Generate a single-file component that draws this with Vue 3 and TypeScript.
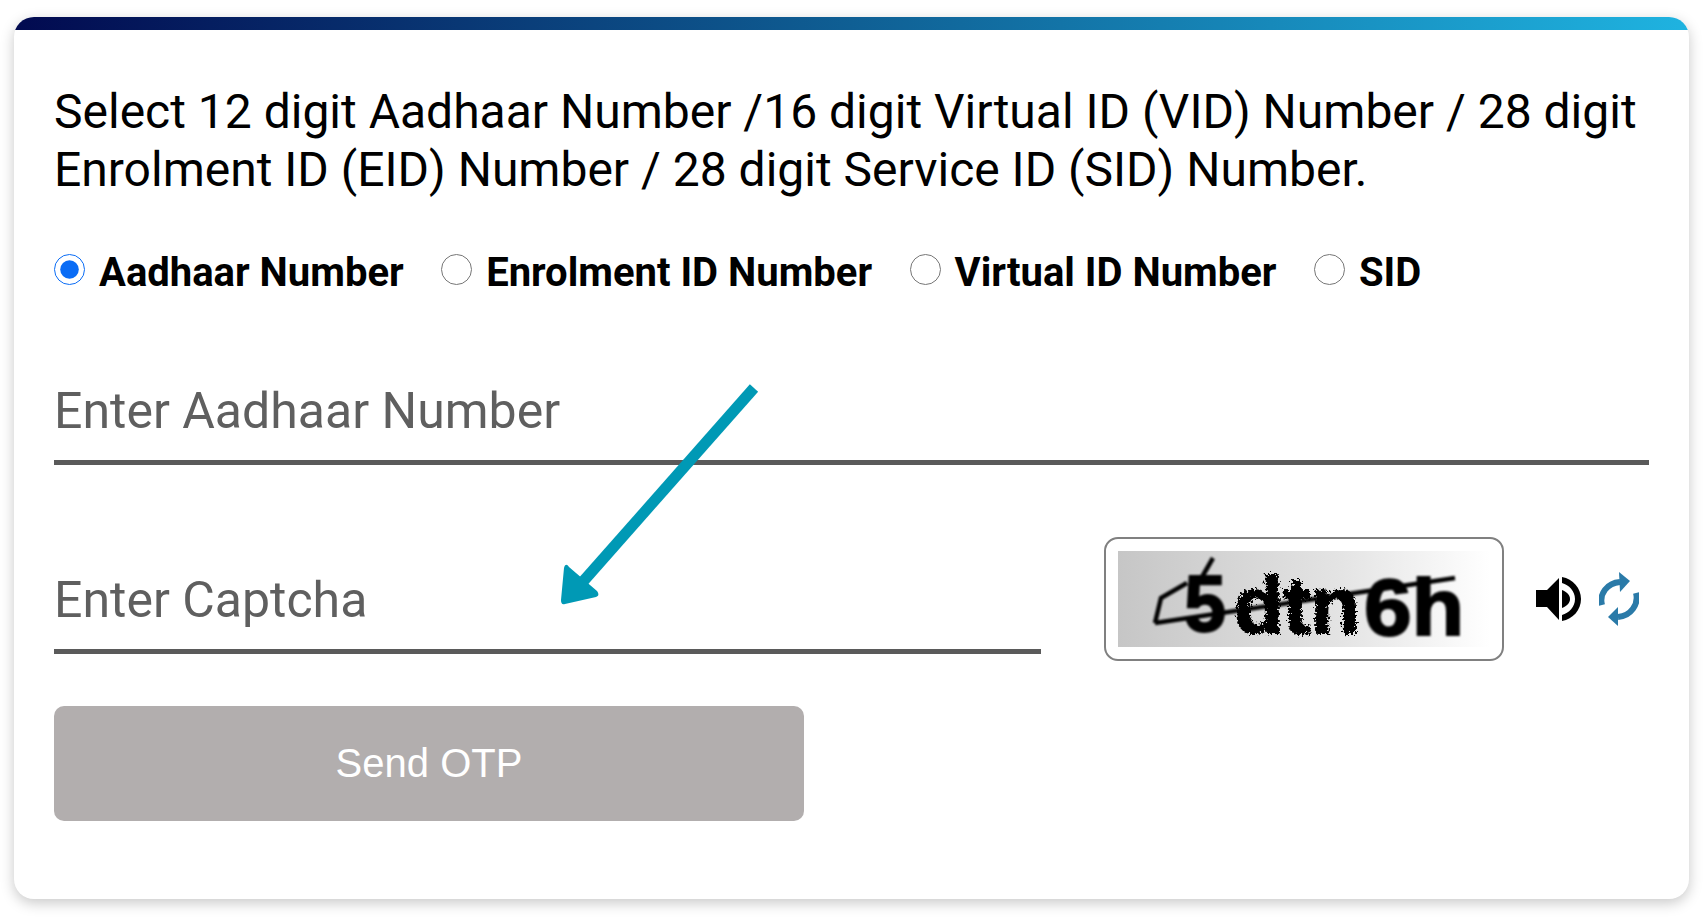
<script setup lang="ts">
import { ref } from 'vue';

const idTypes = [
    { value: 'uid', label: 'Aadhaar Number' },
    { value: 'eid', label: 'Enrolment ID Number' },
    { value: 'vid', label: 'Virtual ID Number' },
    { value: 'sid', label: 'SID' },
];

const selected = ref('uid');
</script>

<template>
    <div class="page">
        <div class="card">
            <div class="card-bar"></div>
            <div class="card-body">
                <p class="intro">
                    Select 12 digit Aadhaar Number /16 digit Virtual ID (VID) Number / 28 digit
                    Enrolment ID (EID) Number / 28 digit Service ID (SID) Number.
                </p>

                <div class="radio-row">
                    <label v-for="t in idTypes" :key="t.value" class="radio-item">
                        <input v-model="selected" type="radio" name="idType" :value="t.value" />
                        <span>{{ t.label }}</span>
                    </label>
                </div>

                <input class="field" type="text" placeholder="Enter Aadhaar Number" />

                <div class="captcha-row">
                    <input class="field captcha-field" type="text" placeholder="Enter Captcha" />
                    <div class="captcha-box">
                        <svg class="captcha-img" viewBox="0 0 372 96" width="372" height="96">
                            <defs>
                                <linearGradient id="capBg" x1="0" y1="0" x2="1" y2="0">
                                    <stop offset="0" stop-color="#c6c6c6" />
                                    <stop offset="0.6" stop-color="#e4e4e4" />
                                    <stop offset="1" stop-color="#ffffff" />
                                </linearGradient>
                                <filter id="capFuzz" x="-5%" y="-10%" width="110%" height="120%">
                                    <feTurbulence type="fractalNoise" baseFrequency="0.45" numOctaves="2" seed="4" />
                                    <feDisplacementMap in="SourceGraphic" scale="11" />
                                    <feGaussianBlur stdDeviation="0.6" />
                                </filter>
                                <filter id="capSoft" x="-5%" y="-10%" width="110%" height="120%">
                                    <feGaussianBlur stdDeviation="0.8" />
                                </filter>
                            </defs>
                            <rect width="372" height="96" fill="url(#capBg)" />
                            <g filter="url(#capSoft)">
                                <text x="66" y="80" class="captcha-text" textLength="42" lengthAdjust="spacingAndGlyphs">5</text>
                                <text x="246" y="84" class="captcha-text" textLength="100" lengthAdjust="spacingAndGlyphs">6h</text>
                                <path d="M37 72L337 27M37 72L43 47L69 32M95 7L84 26" fill="none" stroke="#000" stroke-width="4.5" />
                            </g>
                            <text x="116" y="82" class="captcha-text" filter="url(#capFuzz)" textLength="126" lengthAdjust="spacingAndGlyphs">dtn</text>
                        </svg>
                    </div>
                    <div class="captcha-icons">
                        <svg class="icon-sound" viewBox="0 0 46 44" width="46" height="44">
                            <path d="M1 13H12L24 1V43L12 30H1Z" fill="#000" />
                            <path d="M27 13C32 15 35 18 35 22C35 26 32 29 27 31Z" fill="#000" />
                            <path d="M27 0C38 2 46 11 46 22C46 33 38 42 27 44V38C34 36 40 30 40 22C40 14 34 8 27 6Z" fill="#000" />
                        </svg>
                        <svg class="icon-refresh" viewBox="0 0 40 54" width="40" height="54">
                            <path d="M3 33C0 22 8 11 21 10" fill="none" stroke="#2a7aa8" stroke-width="6" />
                            <path d="M20 0L31 9L21 20Z" fill="#2a7aa8" />
                            <path d="M37 21C40 32 32 44 19 45" fill="none" stroke="#2a7aa8" stroke-width="6" />
                            <path d="M19 35L9 45L19 54Z" fill="#2a7aa8" />
                        </svg>
                    </div>
                </div>

                <button class="send-btn" type="button">Send OTP</button>
            </div>

            <!-- annotation arrow drawn on top of the form -->
            <svg class="arrow" viewBox="0 0 206 224" width="206" height="224">
                <path d="M198 4L24 201" fill="none" stroke="#0099b5" stroke-width="11" />
                <path d="M5 216L8 184C9 180 11 180 13 183L41 207C43 210 43 212 40 213L9 220C6 221 5 219 5 216Z" fill="#0099b5" />
            </svg>
        </div>
    </div>
</template>

<style scoped>
.page {
    padding: 17px 18px 22px 14px;
    font-family: Roboto, "Liberation Sans", sans-serif;
}

.card {
    position: relative;
    background: #fff;
    border-radius: 20px;
    box-shadow: 0 4px 14px rgba(0, 0, 0, 0.22);
    overflow: hidden;
    height: 882px;
}

.card-bar {
    height: 13px;
    background: linear-gradient(90deg, #020a50 0%, #0f5f94 50%, #1fb3e0 100%);
}

.card-body {
    padding: 53px 40px 0;
}

.intro {
    margin: 0;
    font-size: 48px;
    line-height: 58px;
    color: #000;
}

.radio-row {
    display: flex;
    align-items: center;
    gap: 37.5px;
    margin-top: 51px;
    height: 44px;
}

.radio-item {
    display: flex;
    align-items: center;
    gap: 14px;
    font-size: 40px;
    font-weight: 700;
    color: #000;
}

.radio-item input {
    width: 31px;
    height: 31px;
    margin: 0 0 5px;
    accent-color: #0a6cf5;
}

.field {
    display: block;
    width: 100%;
    height: 80px;
    padding: 0 0 24px;
    margin-top: 91px;
    box-sizing: border-box;
    border: 0;
    border-bottom: 5px solid #5a5a5a;
    outline: none;
    background: transparent;
    font-family: inherit;
    font-size: 50px;
    color: #5f5f5f;
}

.field::placeholder {
    color: #5f5f5f;
    opacity: 1;
}

.captcha-row {
    display: flex;
    align-items: center;
    height: 124px;
    margin-top: 72px;
}

.captcha-field {
    width: 987px;
    flex: none;
    margin: 0 0 7px;
    align-self: flex-end;
}

.captcha-box {
    flex: none;
    box-sizing: border-box;
    width: 400px;
    height: 124px;
    margin-left: 63px;
    padding: 12px;
    border: 2px solid #808080;
    border-radius: 14px;
    display: flex;
}

.captcha-img {
    display: block;
    overflow: visible;
}

.captcha-text {
    font-family: "Liberation Sans", sans-serif;
    font-size: 80px;
    font-weight: 700;
    fill: #000;
    stroke: #000;
    stroke-width: 2px;
}

.captcha-icons {
    display: flex;
    align-items: center;
    gap: 18px;
    margin-left: 31px;
}

.send-btn {
    display: block;
    width: 750px;
    height: 115px;
    margin-top: 45px;
    border: 0;
    border-radius: 10px;
    background: #b2aeae;
    color: #fff;
    font-family: "Liberation Sans", sans-serif;
    font-size: 40px;
}

.arrow {
    position: absolute;
    left: 542px;
    top: 367px;
}
</style>
